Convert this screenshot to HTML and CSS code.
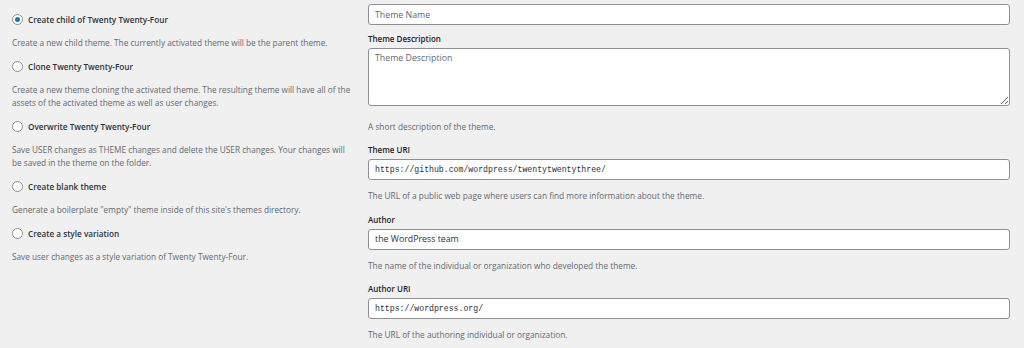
FILE: index.html
```html
<!DOCTYPE html>
<html lang="en">
<head>
    <meta charset="UTF-8">
    <title>Create Block Theme</title>
    <link rel="stylesheet" href="styles.css">
</head>
<body>

<div class="wrap">
    <div class="options">
        <div class="option">
            <label class="option-label"><input type="radio" name="theme" checked> Create child of Twenty Twenty-Four</label>
            <p class="desc">Create a new child theme. The currently activated theme will be the parent theme.</p>
        </div>
        <div class="option">
            <label class="option-label"><input type="radio" name="theme"> Clone Twenty Twenty-Four</label>
            <p class="desc">Create a new theme cloning the activated theme. The resulting theme will have all of the assets of the activated theme as well as user changes.</p>
        </div>
        <div class="option">
            <label class="option-label"><input type="radio" name="theme"> Overwrite Twenty Twenty-Four</label>
            <p class="desc">Save USER changes as THEME changes and delete the USER changes. Your changes will be saved in the theme on the folder.</p>
        </div>
        <div class="option">
            <label class="option-label"><input type="radio" name="theme"> Create blank theme</label>
            <p class="desc">Generate a boilerplate "empty" theme inside of this site's themes directory.</p>
        </div>
        <div class="option">
            <label class="option-label"><input type="radio" name="theme"> Create a style variation</label>
            <p class="desc">Save user changes as a style variation of Twenty Twenty-Four.</p>
        </div>
    </div>

    <div class="fields">
        <input type="text" class="text-input" placeholder="Theme Name">

        <div class="field">
            <label class="field-label">Theme Description</label>
            <textarea class="text-area" placeholder="Theme Description"></textarea>
            <p class="help help-area">A short description of the theme.</p>
        </div>

        <div class="field">
            <label class="field-label">Theme URI</label>
            <input type="text" class="text-input mono" value="https://github.com/wordpress/twentytwentythree/">
            <p class="help">The URL of a public web page where users can find more information about the theme.</p>
        </div>

        <div class="field">
            <label class="field-label">Author</label>
            <input type="text" class="text-input" value="the WordPress team">
            <p class="help">The name of the individual or organization who developed the theme.</p>
        </div>

        <div class="field">
            <label class="field-label">Author URI</label>
            <input type="text" class="text-input mono" value="https://wordpress.org/">
            <p class="help">The URL of the authoring individual or organization.</p>
        </div>
    </div>
</div>

</body>
</html>
```

FILE: styles.css
```css
body {
    margin: 0;
    background-color: #f0f0f1;
    color: #3c434a;
    font-family: "Open Sans", "Noto Sans", sans-serif;
    font-size: 8.4px;
    line-height: 13px;
}

.wrap {
    display: grid;
    grid-template-columns: 344px 642px;
    column-gap: 12px;
    padding: 4px 0 0 12px;
}

/* left column: radio options */
.options {
    padding-top: 8.5px;
}

.option {
    margin-bottom: 11px;
}

.option-label {
    display: flex;
    align-items: center;
    gap: 5px;
    font-size: 8.2px;
    font-weight: 600;
    color: #2c3338;
}

.option-label input {
    appearance: none;
    width: 11px;
    height: 11px;
    margin: 0;
    border: 1px solid #8c8f94;
    border-radius: 50%;
    background: #fff;
    display: grid;
    place-items: center;
}

.option-label input:checked::before {
    content: "";
    width: 5px;
    height: 5px;
    border-radius: 50%;
    background: #2271b1;
}

.desc {
    margin: 10px 0 0;
    font-size: 8.25px;
    color: #646970;
}

/* right column: theme fields */
.fields {
    display: flex;
    flex-direction: column;
}

.field {
    display: flex;
    flex-direction: column;
    margin-top: 7px;
}

.field + .field {
    margin-top: 10.5px;
}

.field-label {
    font-size: 8px;
    font-weight: 600;
    color: #1d2327;
    margin-bottom: 3px;
}

.text-input,
.text-area {
    box-sizing: border-box;
    width: 642px;
    margin: 0;
    border: 1px solid #8c8f94;
    border-radius: 3px;
    background: #fff;
    color: #2c3338;
    font-family: "Open Sans", "Noto Sans", sans-serif;
    font-size: 8.8px;
    padding: 0 6px;
}

.text-input {
    height: 21px;
}

.text-area {
    height: 58px;
    padding: 3px 6px;
    line-height: 13px;
}

.text-input::placeholder,
.text-area::placeholder {
    color: #646970;
}

.mono {
    font-family: "Liberation Mono", monospace;
    font-size: 8.2px;
}

.help {
    margin: 9px 0 0;
    color: #646970;
    font-size: 8.3px;
}

.help-area {
    margin-top: 13.5px;
}
```
